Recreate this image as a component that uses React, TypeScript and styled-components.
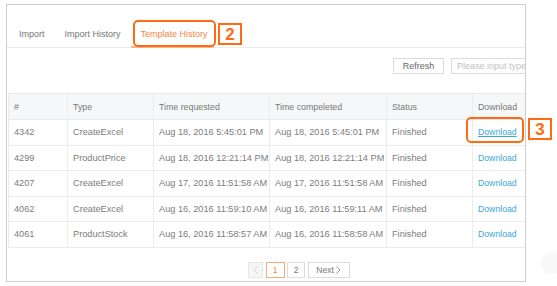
import React from 'react';
import styled, { createGlobalStyle } from 'styled-components';

const orange = '#ff6a13';
const link = '#3aa8d8';

const GlobalStyle = createGlobalStyle`
  body {
    margin: 0;
    background: #fff;
    font-family: "Liberation Sans", Arial, sans-serif;
  }
`;

interface Task {
    id: number;
    type: string;
    requested: string;
    completed: string;
    status: string;
}

const tasks: Task[] = [
    { id: 4342, type: 'CreateExcel', requested: 'Aug 18, 2016 5:45:01 PM', completed: 'Aug 18, 2016 5:45:01 PM', status: 'Finished' },
    { id: 4299, type: 'ProductPrice', requested: 'Aug 18, 2016 12:21:14 PM', completed: 'Aug 18, 2016 12:21:14 PM', status: 'Finished' },
    { id: 4207, type: 'CreateExcel', requested: 'Aug 17, 2016 11:51:58 AM', completed: 'Aug 17, 2016 11:51:58 AM', status: 'Finished' },
    { id: 4062, type: 'CreateExcel', requested: 'Aug 16, 2016 11:59:10 AM', completed: 'Aug 16, 2016 11:59:11 AM', status: 'Finished' },
    { id: 4061, type: 'ProductStock', requested: 'Aug 16, 2016 11:58:57 AM', completed: 'Aug 16, 2016 11:58:58 AM', status: 'Finished' },
];

const tabs = ['Import', 'Import History', 'Template History'];

const Chevron = ({ dir, color }: { dir: 'left' | 'right'; color: string }) => (
    <svg width="5" height="8" viewBox="0 0 5 8">
        <path
            d={dir === 'left' ? 'M4.5 0.5 L1 4 L4.5 7.5' : 'M0.5 0.5 L4 4 L0.5 7.5'}
            fill="none"
            stroke={color}
            strokeWidth="0.9"
        />
    </svg>
);

const App = () => {
    return (
        <Page>
            <GlobalStyle />
            <Panel>
                <Content>
                    <TabBar>
                        {tabs.map((t, i) => (
                            <Tab key={t} $active={i === 2}>
                                {t}
                            </Tab>
                        ))}
                    </TabBar>

                    <Toolbar>
                        <Button>Refresh</Button>
                        <SearchInput placeholder="Please input type" />
                    </Toolbar>

                    <Table>
                        <colgroup>
                            <col style={{ width: 59 }} />
                            <col style={{ width: 86 }} />
                            <col style={{ width: 116 }} />
                            <col style={{ width: 117 }} />
                            <col style={{ width: 86 }} />
                            <col />
                        </colgroup>
                        <thead>
                            <HeadRow>
                                <Th>#</Th>
                                <Th>Type</Th>
                                <Th>Time requested</Th>
                                <Th>Time compeleted</Th>
                                <Th>Status</Th>
                                <Th>Download</Th>
                            </HeadRow>
                        </thead>
                        <tbody>
                            {tasks.map((task, i) => (
                                <Row key={task.id}>
                                    <Td>{task.id}</Td>
                                    <Td>{task.type}</Td>
                                    <Td>{task.requested}</Td>
                                    <Td>{task.completed}</Td>
                                    <Td>{task.status}</Td>
                                    <Td>
                                        <DownloadLink href="#" $underline={i === 0}>
                                            Download
                                        </DownloadLink>
                                    </Td>
                                </Row>
                            ))}
                        </tbody>
                    </Table>

                    <Pagination>
                        <PageButton $disabled style={{ width: 15 }}>
                            <Chevron dir="left" color="#cfcfcf" />
                        </PageButton>
                        <PageButton $active style={{ width: 19 }}>1</PageButton>
                        <PageButton style={{ width: 18 }}>2</PageButton>
                        <PageButton style={{ width: 42 }}>
                            Next&nbsp;<Chevron dir="right" color="#888" />
                        </PageButton>
                    </Pagination>
                </Content>
            </Panel>

            <Highlight style={{ left: 133, top: 20, width: 83, height: 27 }} />
            <Marker style={{ left: 218, top: 23 }}>2</Marker>
            <Highlight style={{ left: 466, top: 117, width: 58, height: 26 }} />
            <Marker style={{ left: 528, top: 118 }}>3</Marker>
            <FloatDot />
        </Page>
    );
};

export default App;

const Page = styled.div`
    position: relative;
    width: 557px;
    height: 286px;
    padding: 4px 0 0 6px;
    box-sizing: border-box;
    overflow: hidden;
`;

const Panel = styled.div`
    width: 520px;
    height: 278px;
    border: 1px solid #cdcdcd;
    box-sizing: border-box;
    overflow: hidden;
`;

const Content = styled.div`
    width: 584px;
`;

const TabBar = styled.div`
    display: flex;
    align-items: flex-end;
    height: 43px;
    padding-left: 2px;
    border-bottom: 1px solid #ececec;
    box-sizing: border-box;
`;

const Tab = styled.div<{ $active?: boolean }>`
    position: relative;
    padding: 0 10px 7px;
    font-size: 9px;
    line-height: 12px;
    color: ${(p) => (p.$active ? '#f7853f' : '#777')};

    &::after {
        content: '';
        display: ${(p) => (p.$active ? 'block' : 'none')};
        position: absolute;
        left: 0;
        right: 4px;
        bottom: -1px;
        height: 2px;
        background: #fbb48a;
    }
`;

const Toolbar = styled.div`
    display: flex;
    justify-content: flex-end;
    gap: 7px;
    height: 45px;
    padding: 10px 6px 0 0;
    box-sizing: border-box;
`;

const Button = styled.button`
    width: 51px;
    height: 16px;
    padding: 0;
    border: 1px solid #dcdcdc;
    background: #fff;
    font-family: inherit;
    font-size: 9px;
    color: #666;
`;

const SearchInput = styled.input`
    width: 134px;
    height: 16px;
    padding: 0 5px;
    border: 1px solid #dcdcdc;
    box-sizing: border-box;
    font-family: inherit;
    font-size: 9px;
    outline: none;

    &::placeholder {
        color: #c2c2c2;
    }
`;

const Table = styled.table`
    width: 583px;
    margin-left: 1px;
    border-collapse: collapse;
    table-layout: fixed;
`;

const HeadRow = styled.tr`
    height: 26px;
`;

const Row = styled.tr`
    height: 25.5px;
`;

const Th = styled.th`
    padding: 0 5px;
    border: 1px solid #ebebeb;
    background: #f6f7f8;
    text-align: left;
    font-weight: normal;
    font-size: 8.8px;
    color: #777;
    white-space: nowrap;
`;

const Td = styled.td`
    padding: 0 5px;
    border: 1px solid #ececec;
    font-size: 9.2px;
    color: #7c7c7c;
    white-space: nowrap;
`;

const DownloadLink = styled.a<{ $underline?: boolean }>`
    color: ${link};
    font-size: 8.7px;
    text-decoration: ${(p) => (p.$underline ? 'underline' : 'none')};
`;

const Pagination = styled.div`
    display: flex;
    justify-content: center;
    gap: 2.5px;
    padding-top: 14px;
`;

const PageButton = styled.div<{ $active?: boolean; $disabled?: boolean }>`
    display: flex;
    align-items: center;
    justify-content: center;
    height: 16px;
    box-sizing: border-box;
    border: 1px solid ${(p) => (p.$active ? '#f9a878' : p.$disabled ? '#e6e6e6' : '#dcdcdc')};
    background: ${(p) => (p.$disabled ? '#f6f6f6' : '#fff')};
    font-size: 8.6px;
    color: ${(p) => (p.$active ? '#f7853f' : '#777')};
`;

const Highlight = styled.div`
    position: absolute;
    border: 2px solid ${orange};
    border-radius: 5px;
    box-sizing: border-box;
`;

const Marker = styled.div`
    position: absolute;
    width: 24px;
    height: 22px;
    border: 2.5px solid ${orange};
    box-sizing: border-box;
    display: flex;
    align-items: center;
    justify-content: center;
    font-size: 17px;
    font-weight: bold;
    line-height: 1;
    color: ${orange};
`;

const FloatDot = styled.div`
    position: absolute;
    left: 541px;
    top: 252px;
    width: 22px;
    height: 22px;
    border-radius: 50%;
    background: #f8f8f8;
`;
